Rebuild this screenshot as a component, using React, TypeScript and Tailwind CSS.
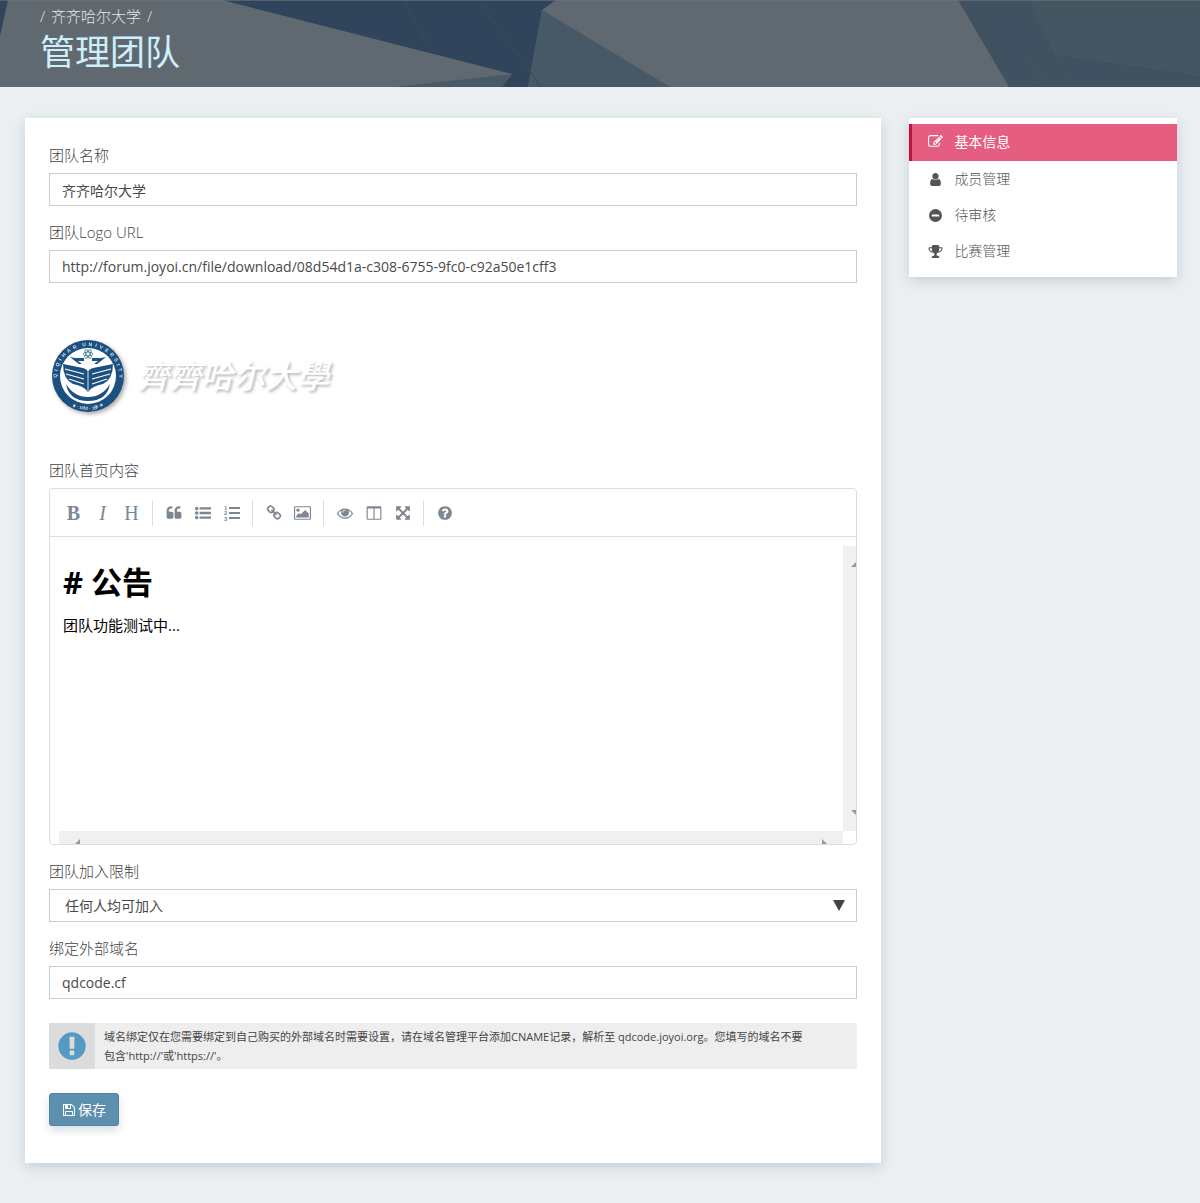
import type { ReactNode } from "react";

const icons = {
  quote:
    "M832 960v384q0 80-56 136t-136 56h-384q-80 0-136-56t-56-136v-704q0-104 40.5-198.5t109.5-163.5 163.5-109.5 198.5-40.5h64q26 0 45 19t19 45v128q0 26-19 45t-45 19h-64q-106 0-181 75t-75 181v32q0 40 28 68t68 28h224q80 0 136 56t56 136zm896 0v384q0 80-56 136t-136 56h-384q-80 0-136-56t-56-136v-704q0-104 40.5-198.5t109.5-163.5 163.5-109.5 198.5-40.5h64q26 0 45 19t19 45v128q0 26-19 45t-45 19h-64q-106 0-181 75t-75 181v32q0 40 28 68t68 28h224q80 0 136 56t56 136z",
  listUl:
    "M384 1408q0 80-56 136t-136 56-136-56-56-136 56-136 136-56 136 56 56 136zm0-512q0 80-56 136t-136 56-136-56-56-136 56-136 136-56 136 56 56 136zm1408 416v192q0 13-9.5 22.5t-22.5 9.5h-1216q-13 0-22.5-9.5t-9.5-22.5v-192q0-13 9.5-22.5t22.5-9.5h1216q13 0 22.5 9.5t9.5 22.5zm-1408-928q0 80-56 136t-136 56-136-56-56-136 56-136 136-56 136 56 56 136zm1408 416v192q0 13-9.5 22.5t-22.5 9.5h-1216q-13 0-22.5-9.5t-9.5-22.5v-192q0-13 9.5-22.5t22.5-9.5h1216q13 0 22.5 9.5t9.5 22.5zm0-512v192q0 13-9.5 22.5t-22.5 9.5h-1216q-13 0-22.5-9.5t-9.5-22.5v-192q0-13 9.5-22.5t22.5-9.5h1216q13 0 22.5 9.5t9.5 22.5z",
  link: "M1520 1216q0-40-28-68l-208-208q-28-28-68-28-42 0-72 32 3 3 19 18.5t21.5 21.5 15 19 13 25.5 3.5 27.5q0 40-28 68t-68 28q-15 0-27.5-3.5t-25.5-13-19-15-21.5-21.5-18.5-19q-33 31-33 73 0 40 28 68l206 207q27 27 68 27 40 0 68-26l147-146q28-28 28-67zm-703-705q0-40-28-68l-206-207q-28-28-68-28-39 0-68 27l-147 146q-28 28-28 67 0 40 28 68l208 208q27 27 68 27 42 0 72-31-3-3-19-18.5t-21.5-21.5-15-19-13-25.5-3.5-27.5q0-40 28-68t68-28q15 0 27.5 3.5t25.5 13 19 15 21.5 21.5 18.5 19q33-31 33-73zm895 705q0 120-85 203l-147 146q-83 83-203 83-121 0-204-85l-206-207q-83-83-83-203 0-123 88-209l-88-88q-86 88-208 88-120 0-204-84l-208-208q-84-84-84-204t85-203l147-146q83-83 203-83 121 0 204 85l206 207q83 83 83 203 0 123-88 209l88 88q86-88 208-88 120 0 204 84l208 208q84 84 84 204z",
  image:
    "M576 576q0 80-56 136t-136 56-136-56-56-136 56-136 136-56 136 56 56 136zm1024 384v448h-1408v-192l320-320 160 160 512-512zm96-704h-1600q-13 0-22.5 9.5t-9.5 22.5v1216q0 13 9.5 22.5t22.5 9.5h1600q13 0 22.5-9.5t9.5-22.5v-1216q0-13-9.5-22.5t-22.5-9.5zm160 32v1216q0 66-47 113t-113 47h-1600q-66 0-113-47t-47-113v-1216q0-66 47-113t113-47h1600q66 0 113 47t47 113z",
  eye: "M1664 960q-152-236-381-353 61 104 61 225 0 185-131.5 316.5t-316.5 131.5-316.5-131.5-131.5-316.5q0-121 61-225-229 117-381 353 133 205 333.5 326.5t434.5 121.5 434.5-121.5 333.5-326.5zm-720-384q0-20-14-34t-34-14q-125 0-214.5 89.5t-89.5 214.5q0 20 14 34t34 14 34-14 14-34q0-86 61-147t147-61q20 0 34-14t14-34zm848 384q0 34-20 69-140 230-376.5 368.5t-499.5 138.5-499.5-139-376.5-368q-20-35-20-69t20-69q140-229 376.5-368t499.5-139 499.5 139 376.5 368q20 35 20 69z",
  columns:
    "M224 1536h608v-1152h-640v1120q0 13 9.5 22.5t22.5 9.5zm1376-32v-1120h-640v1152h608q13 0 22.5-9.5t9.5-22.5zm128-1216v1216q0 66-47 113t-113 47h-1344q-66 0-113-47t-47-113v-1216q0-66 47-113t113-47h1344q66 0 113 47t47 113z",
  arrows:
    "M1411 541l-355 355 355 355 144-144q29-31 70-14 39 17 39 59v448q0 26-19 45t-45 19h-448q-42 0-59-40-17-39 14-69l144-144-355-355-355 355 144 144q31 30 14 69-17 40-59 40h-448q-26 0-45-19t-19-45v-448q0-42 40-59 39-17 69 14l144 144 355-355-355-355-144 144q-19 19-45 19-12 0-24-5-40-17-40-59v-448q0-26 19-45t45-19h448q42 0 59 40 17 39-14 69l-144 144 355 355 355-355-144-144q-31-30-14-69 17-40 59-40h448q26 0 45 19t19 45v448q0 42-39 59-13 5-25 5-26 0-45-19z",
  question:
    "M1024 1376v-192q0-14-9-23t-23-9h-192q-14 0-23 9t-9 23v192q0 14 9 23t23 9h192q14 0 23-9t9-23zm256-672q0-88-55.5-163t-138.5-116-170-41q-243 0-371 213-15 24 8 42l132 100q7 6 19 6 16 0 25-12 53-68 86-92 34-24 86-24 48 0 85.5 26t37.5 59q0 38-20 61t-68 45q-63 28-115.5 86.5t-52.5 125.5v36q0 14 9 23t23 9h192q14 0 23-9t9-23q0-19 21.5-49.5t54.5-49.5q32-18 49-28.5t46-35 44.5-48 28-60.5 12.5-81zm384 192q0 209-103 385.5t-279.5 279.5-385.5 103-385.5-103-279.5-279.5-103-385.5 103-385.5 279.5-279.5 385.5-103 385.5 103 279.5 279.5 103 385.5z",
  exclamation:
    "M896 128q209 0 385.5 103t279.5 279.5 103 385.5-103 385.5-279.5 279.5-385.5 103-385.5-103-279.5-279.5-103-385.5 103-385.5 279.5-279.5 385.5-103zm128 1247v-190q0-14-9-23.5t-22-9.5h-192q-13 0-23 10t-10 23v190q0 13 10 23t23 10h192q13 0 22-9.5t9-23.5zm-2-344l18-621q0-12-10-18-10-8-24-8h-220q-14 0-24 8-10 6-10 18l17 621q0 10 10 17.5t24 7.5h185q14 0 23.5-7.5t10.5-17.5z",
  save: "M512 1536h768v-384h-768v384zm896 0h128v-896q0-14-10-38.5t-20-34.5l-281-281q-10-10-34-20t-39-10v416q0 40-28 68t-68 28h-576q-40 0-68-28t-28-68v-416h-128v1280h128v-416q0-40 28-68t68-28h832q40 0 68 28t28 68v416zm-384-928v-320q0-13-9.5-22.5t-22.5-9.5h-192q-13 0-22.5 9.5t-9.5 22.5v320q0 13 9.5 22.5t22.5 9.5h192q13 0 22.5-9.5t9.5-22.5zm640 32v928q0 40-28 68t-68 28h-1344q-40 0-68-28t-28-68v-1344q0-40 28-68t68-28h928q40 0 88 20t76 48l280 280q28 28 48 76t20 88z",
  edit: "M888 1184l116-116-152-152-116 116v56h96v96h56zm440-720q-16-16-33 1l-350 350q-17 17-1 33t33-1l350-350q17-17 1-33zm80 594v190q0 119-84.5 203.5t-203.5 84.5h-832q-119 0-203.5-84.5t-84.5-203.5v-832q0-119 84.5-203.5t203.5-84.5h832q63 0 117 25 15 7 18 23 3 17-9 29l-49 49q-14 14-32 8-23-6-45-6h-832q-66 0-113 47t-47 113v832q0 66 47 113t113 47h832q66 0 113-47t47-113v-126q0-13 9-22l64-64q15-15 35-7t20 29zm-96-738l288 288-672 672h-288v-288zm444 132l-92 92-288-288 92-92q28-28 68-28t68 28l152 152q28 28 28 68t-28 68z",
  user: "M1536 1399q0 109-62.5 187t-150.5 78h-854q-88 0-150.5-78t-62.5-187q0-85 8.5-160.5t31.5-152 58.5-131 94-89 134.5-34.5q131 128 313 128t313-128q76 0 134.5 34.5t94 89 58.5 131 31.5 152 8.5 160.5zm-256-887q0 159-112.5 271.5t-271.5 112.5-271.5-112.5-112.5-271.5 112.5-271.5 271.5-112.5 271.5 112.5 112.5 271.5z",
  minus:
    "M1344 960v-128q0-26-19-45t-45-19h-768q-26 0-45 19t-19 45v128q0 26 19 45t45 19h768q26 0 45-19t19-45zm320-64q0 209-103 385.5t-279.5 279.5-385.5 103-385.5-103-279.5-279.5-103-385.5 103-385.5 279.5-279.5 385.5-103 385.5 103 279.5 279.5 103 385.5z",
  trophy:
    "M522 883q-74-162-74-371h-256v96q0 78 94.5 162t235.5 113zm1078-275v-96h-256q0 209-74 371 141-29 235.5-113t94.5-162zm128-128v128q0 71-41.5 143t-112 130-173 97.5-215.5 44.5q-42 54-95 95-38 34-52.5 72.5t-14.5 89.5q0 54 30.5 91t97.5 37q75 0 133.5 45.5t58.5 114.5v64q0 14-9 23t-23 9h-832q-14 0-23-9t-9-23v-64q0-69 58.5-114.5t133.5-45.5q67 0 97.5-37t30.5-91q0-51-14.5-89.5t-52.5-72.5q-53-41-95-95-113-5-215.5-44.5t-173-97.5-112-130-41.5-143v-128q0-40 28-68t68-28h288v-96q0-66 47-113t113-47h576q66 0 113 47t47 113v96h288q40 0 68 28t28 68z",
};

type IconName = keyof typeof icons;

function Icon({ name, className }: { name: IconName; className: string }) {
  return (
    <svg viewBox={name === "image" ? "-64 0 1920 1792" : "0 0 1792 1792"} fill="currentColor" aria-hidden="true" className={className}>
      <path d={icons[name]} />
    </svg>
  );
}

function NumberedListIcon() {
  return (
    <svg viewBox="0 0 16 16" fill="currentColor" aria-hidden="true" className="size-4">
      <path d="M5 2h11v2H5zM5 7h11v2H5zM5 12h11v2H5z" />
      <g fontFamily="Liberation Sans" fontSize="6" fontWeight="700">
        <text x="0" y="5">1</text>
        <text x="0" y="10">2</text>
        <text x="0" y="16">3</text>
      </g>
    </svg>
  );
}

function HeaderArt() {
  return (
    <svg viewBox="0 0 1200 87" preserveAspectRatio="none" aria-hidden="true" className="absolute inset-0 size-full">
      <path d="M0 0H1200V87H0z" fill="#616970" />
      <path d="M0 0H8L0 36z" fill="#30455c" />
      <path d="M222 0L512 74L502 87H528L542 10L556 0z" fill="#30455c" />
      <path d="M395 87L512 74L502 87z" fill="#485967" />
      <path d="M542 10L528 87H670z" fill="#475867" />
      <path d="M958 0H1200V87H1009z" fill="#405161" />
      <path d="M1030 0H1200V77L1056 56z" fill="#435662" />
      <path d="M404 0L426 42M478 0Q508 40 541 87" fill="none" stroke="#3a4d5e" strokeWidth="1" />
      <path d="M1030 0L1073 87M1028 51L1041 87M1030 60L1052 87" fill="none" stroke="#4a5a66" strokeWidth="1" opacity=".6" />
      <path d="M1028 51L1200 77" fill="none" stroke="#38505a" strokeWidth="1" strokeDasharray="6 4" />
      <path d="M0 0.5H1200" stroke="#6b757d" strokeWidth="1" opacity=".6" />
    </svg>
  );
}

function Emblem() {
  return (
    <svg viewBox="0 0 74 74" role="img" aria-label="齐齐哈尔大学校徽" className="size-[74px] drop-shadow-[2px_2px_2px_rgba(0,0,0,0.35)]">
      <defs>
        <path id="ring-top" d="M9.500 53A31.200 31.200 0 1 1 64.500 53" />
        <path id="ring-bottom" d="M10 57A33.500 33.500 0 0 0 64 57" />
      </defs>
      <circle cx="37" cy="37" r="36" fill="#1c5080" />
      <circle cx="37" cy="37" r="28" fill="#fff" />
      <g fill="#d5e2ec" fontFamily="Liberation Sans" fontSize="5" fontWeight="700">
        <text>
          <textPath href="#ring-top" startOffset="50%" textAnchor="middle">
            {"Q I Q I H A R \u00a0\u00a0U N I V E R S I T Y".replace(/ /g, "\u00a0\u00a0")}
          </textPath>
        </text>
        <text fontSize="4">
          <textPath href="#ring-bottom" startOffset="50%" textAnchor="middle">★ · 1952 · 大学 ★</textPath>
        </text>
      </g>
      <g fill="none" stroke="#3d7a94" strokeWidth="0.8">
        <ellipse cx="37" cy="15" rx="5" ry="2" />
        <ellipse cx="37" cy="15" rx="5" ry="2" transform="rotate(60 37 15)" />
        <ellipse cx="37" cy="15" rx="5" ry="2" transform="rotate(120 37 15)" />
      </g>
      <path d="M19 18L24 19L33 19L33 22L27 22L31 25L28 25L24 22zM55 18L50 19L41 19L41 22L47 22L43 25L46 25L50 22z" fill="#1c5080" />
      <path d="M12 25L32 29Q36 30 37 33Q38 30 42 29L62 25Q62 40 52 45Q41 47 37 53Q33 47 22 45Q12 40 12 25z" fill="#1c5080" />
      <path d="M14 30L33 35M15 35L33 40M18 40L33 45M60 30L41 35M59 35L41 40M56 40L41 45" stroke="#fff" strokeWidth="1.200" />
      <path d="M37 33V52" stroke="#d5e2ec" strokeWidth="1" />
      <path d="M15 45Q23 58 37 58Q51 58 59 45Q56 62 37 62Q18 62 15 45z" fill="#1c5080" />
    </svg>
  );
}

function Tool({ label, children }: { label: string; children: ReactNode }) {
  return (
    <button type="button" aria-label={label} className="flex h-8 w-[29px] items-center justify-center font-['Liberation_Serif',serif] text-xl text-[#7d8792]">
      {children}
    </button>
  );
}

function Divider() {
  return <span className="mx-1.5 h-[26px] w-px bg-[#dcdfe1]" />;
}

const labelClass = "mb-1.5 block text-[15px] leading-6 font-light text-[#444]";
const controlClass = "block h-[33px] w-full border border-[#ccc] bg-white px-3 text-sm text-[#4a4a4a] outline-none";

const menu: { icon: IconName; text: string }[] = [
  { icon: "user", text: "成员管理" },
  { icon: "minus", text: "待审核" },
  { icon: "trophy", text: "比赛管理" },
];

export default function App() {
  return (
    <div className="min-h-screen bg-[#ebeff2] pb-10 font-['Open_Sans','Noto_Sans_CJK_SC',sans-serif] text-[#444]">
      <header className="relative h-[87px] px-10 pt-1">
        <HeaderArt />
        <nav aria-label="路径" className="relative text-[15px] leading-6 font-light text-[#e4e7ea]">
          / <a href="#team" className="mx-0.5">齐齐哈尔大学</a> /
        </nav>
        <h1 className="relative text-[35px] leading-[48px] text-[#cdeffc]">管理团队</h1>
      </header>

      <div className="mt-[31px] grid grid-cols-[16fr_5fr] items-start gap-7 pr-[23px] pl-[25px]">
        <main className="bg-white px-6 pt-[25px] pb-[37px] shadow-[0_4px_12px_rgba(60,80,100,0.2)]">
          <form className="flex flex-col">
            <div>
              <label htmlFor="name" className={labelClass}>团队名称</label>
              <input id="name" defaultValue="齐齐哈尔大学" className={controlClass} />
            </div>

            <div className="mt-3.5">
              <label htmlFor="logo" className={labelClass}>团队Logo URL</label>
              <input id="logo" defaultValue="http://forum.joyoi.cn/file/download/08d54d1a-c308-6755-9fc0-c92a50e1cff3" className={controlClass} />
            </div>

            <div className="flex h-[161px] items-center gap-3 pt-6 pl-0.5">
              <Emblem />
              <span className="text-[32px] leading-10 font-medium text-white italic [text-shadow:2px_2px_3px_rgba(0,0,0,0.28)]">齊齊哈尔大學</span>
            </div>

            <div className="mt-3.5">
              <label htmlFor="content" className={labelClass}>团队首页内容</label>
              <div className="overflow-hidden rounded-sm border border-[#ddd]">
                <div className="flex h-12 items-center border-b border-[#ddd] pl-[9px]">
                  <Tool label="粗体"><b>B</b></Tool>
                  <Tool label="斜体"><i>I</i></Tool>
                  <Tool label="标题"><span>H</span></Tool>
                  <Divider />
                  <Tool label="引用"><Icon name="quote" className="size-4" /></Tool>
                  <Tool label="无序列表"><Icon name="listUl" className="size-4" /></Tool>
                  <Tool label="有序列表"><NumberedListIcon /></Tool>
                  <Divider />
                  <Tool label="链接"><Icon name="link" className="size-4" /></Tool>
                  <Tool label="图片"><Icon name="image" className="h-4 w-[17px]" /></Tool>
                  <Divider />
                  <Tool label="预览"><Icon name="eye" className="size-4" /></Tool>
                  <Tool label="分栏"><Icon name="columns" className="size-4" /></Tool>
                  <Tool label="全屏"><Icon name="arrows" className="size-4" /></Tool>
                  <Divider />
                  <Tool label="帮助"><Icon name="question" className="size-4" /></Tool>
                </div>
                <div className="grid h-[307px] grid-cols-[1fr_13px] grid-rows-[1fr_13px] pt-[9px] pl-[9px]">
                  <div id="content" role="textbox" aria-multiline="true" aria-label="团队首页内容" contentEditable suppressContentEditableWarning className="px-1 pt-3.5 text-black outline-none">
                    <p className="text-[31px] leading-[45px] font-bold"># 公告</p>
                    <p className="mt-2 text-[15px] leading-6">团队功能测试中...</p>
                  </div>
                  <div className="flex flex-col items-end justify-between bg-[#f0f0f0] py-4">
                    <svg viewBox="0 0 5 5" aria-hidden="true" className="size-[5px]"><path d="M5 0V5H0z" fill="#999" /></svg>
                    <svg viewBox="0 0 5 5" aria-hidden="true" className="size-[5px]"><path d="M0 0H5V5z" fill="#999" /></svg>
                  </div>
                  <div className="flex items-end justify-between bg-[#f0f0f0] px-4">
                    <svg viewBox="0 0 5 5" aria-hidden="true" className="size-[5px]"><path d="M5 0V5H0z" fill="#999" /></svg>
                    <svg viewBox="0 0 5 5" aria-hidden="true" className="size-[5px]"><path d="M0 0L5 5H0z" fill="#999" /></svg>
                  </div>
                </div>
              </div>
            </div>

            <div className="mt-3.5">
              <label htmlFor="limit" className={labelClass}>团队加入限制</label>
              <div className="relative">
                <select id="limit" className={controlClass + " appearance-none pl-[15px]"}>
                  <option>任何人均可加入</option>
                </select>
                <svg viewBox="0 0 12 12" aria-hidden="true" className="pointer-events-none absolute top-[11px] right-3 size-3"><path d="M0 0H12L6 11z" fill="#444" /></svg>
              </div>
            </div>

            <div className="mt-3.5">
              <label htmlFor="domain" className={labelClass}>绑定外部域名</label>
              <input id="domain" defaultValue="qdcode.cf" className={controlClass} />
            </div>

            <div className="mt-6 flex min-h-[46px] bg-[#eee]">
              <div className="flex w-[46px] shrink-0 items-center justify-center bg-[#dcdcdc]">
                <Icon name="exclamation" className="size-8 text-[#5599c5]" />
              </div>
              <p className="px-[9px] pt-1 text-[11px] leading-[19px] text-[#444]">
                域名绑定仅在您需要绑定到自己购买的外部域名时需要设置，请在域名管理平台添加CNAME记录，解析至 qdcode.joyoi.org。您填写的域名不要
                <br />
                包含'http://'或'https://'。
              </p>
            </div>

            <button type="button" className="mt-6 flex h-[33px] items-center gap-0.5 self-start rounded-[3px] border border-[#5285a3] bg-[#5d90ae] px-3 text-sm text-white shadow-[0_4px_8px_rgba(60,80,120,0.2)]">
              <Icon name="save" className="size-3.5" />
              保存
            </button>
          </form>
        </main>

        <aside className="bg-white pt-1.5 pb-2 text-sm font-light shadow-[0_4px_12px_rgba(60,80,100,0.2)]">
          <nav aria-label="团队管理">
            <a href="#info" aria-current="page" className="flex h-[37px] items-center border-l-3 border-[#c4103f] bg-[#e55d80] pb-0.5 pl-4 font-normal text-white">
              <Icon name="edit" className="mr-[11px] size-[15px]" />
              基本信息
            </a>
            {menu.map((item) => (
              <a key={item.text} href={"#" + item.icon} className="flex h-9 items-center border-l-3 border-transparent pl-4 text-[#555]">
                <Icon name={item.icon} className="mr-[11px] size-[15px]" />
                {item.text}
              </a>
            ))}
          </nav>
        </aside>
      </div>
    </div>
  );
}
